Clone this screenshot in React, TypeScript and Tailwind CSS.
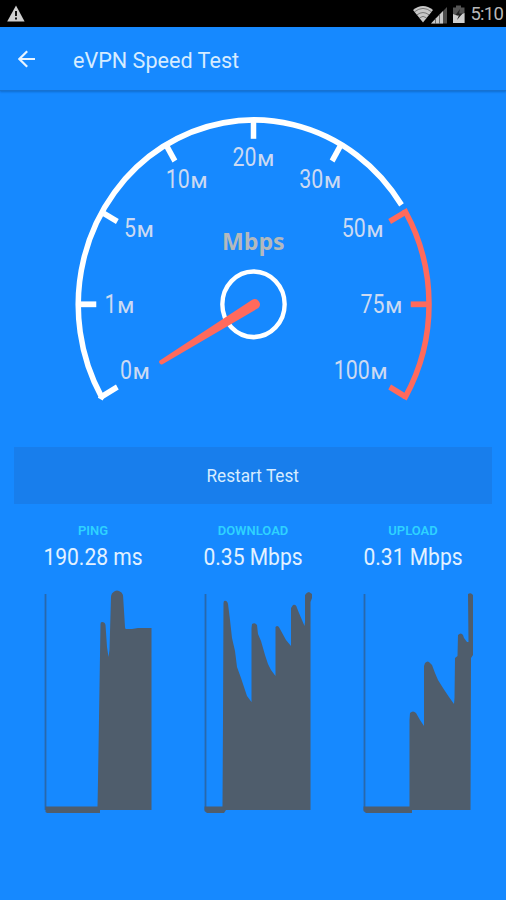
const whiteTicks = [0, 1, 2, 3, 4, 5];
const redTicks = [6, 7, 8];

// x = left edge, w = width of the digits, y = baseline
const labels = [
  { value: "0", x: 120, w: 12, y: 378.8 },
  { value: "1", x: 104.5, w: 12, y: 312.5 },
  { value: "5", x: 124, w: 12, y: 237.3 },
  { value: "10", x: 165.7, w: 24, y: 188 },
  { value: "20", x: 232.5, w: 24, y: 166.3 },
  { value: "30", x: 299.3, w: 24, y: 188 },
  { value: "50", x: 341.7, w: 24, y: 237.3 },
  { value: "75", x: 360.5, w: 24, y: 312.5 },
  { value: "100", x: 333.7, w: 36, y: 378.8 },
];

const stats = [
  {
    label: "PING",
    value: "190.28 ms",
    axis: 15.5,
    path: "M15.5 226.5 L15.5 232 L17 233 L70 233 L70 230 L121.5 230 L121.5 48 L108 48 L102 49 L96 49 Q95 49 95 47 L93 15 Q92 12 89 11 Q87 10 85 11 Q81 13 81 17 L79.5 70 L78.5 77 L77 67 L75.5 45 Q75 42 72 42 Q70.5 42 70.5 44 L68 201 L67.5 226.5 Z",
  },
  {
    label: "DOWNLOAD",
    value: "0.35 Mbps",
    axis: 15.5,
    path: "M14.5 226.5 L14.5 231 L17 233 L34 233 L36 230 L120.5 230 L120.5 22 L122 18 L122 14 L119 12 Q117 12 115 15 L115 42 L114.5 46 L112 40 L109 33 L107 28 Q106 24 103 25 L101 28 L101 66 L96 60 L90 49 Q88 44 85.5 47 L85.5 96 L81 90 L78 84 L75 75 L71 61 L68 54 L67 45 Q65 42 62 44 L61.5 48 L61.5 122 L57 116 L54 107 L51 98 L47 87 L45 71 L42 58 L40 40 L38 24 Q37 20 34 21 L33.5 23 L33 140 L32.5 226.5 Z",
  },
  {
    label: "UPLOAD",
    value: "0.31 Mbps",
    axis: 14.5,
    path: "M13.5 226.5 L13.5 231 L16 233 L62 233 L62 230 L120.5 230 L121 78 L123 75 L123 15 Q121 12 118 14 L118.5 62 L117 62 L114 58 L113 55 Q111 52 108 55 L107.5 76 L105 78 L104.5 118 L104 124 L99 117 L93 108 L88 100 L85 93 L82 85 L80 83 Q78 80 75 83 L74 86 L74 146 L70 140 L66 133 Q63 130 60 133 L59.5 140 L59.5 226.5 Z",
  },
];

function StatusBar() {
  return (
    <div className="flex h-[27px] items-center justify-between bg-black pr-[3px] pl-[7px]">
      <svg width="18" height="17" viewBox="0 0 18 17">
        <path d="M9 .5 L17.6 16.5 H.2 Z" fill="#cfcfcf" />
        <path d="M9 6 V11 M9 12.5 V14.5" stroke="#111" strokeWidth="2" />
      </svg>
      <div className="flex items-center">
        <svg width="54" height="20" viewBox="412 2 54 20">
          <path d="M412 8 Q422 0 432 8 L422 20.5 Z" fill="#c8c8c8" />
          <path
            d="M413.5 9.8 Q422 3 430.5 9.8 M416 12.8 Q422 8.3 428 12.8 M418.5 15.8 Q422 13 425.5 15.8"
            fill="none"
            stroke="#555"
            strokeWidth=".7"
          />
          <path d="M430 21.5 L446 5 V21.5 Z" fill="#4d4d4d" />
          <path d="M430 21.5 L442 9 V21.5 Z" fill="#c8c8c8" />
          <path d="M434.5 16 V22 M438.5 12 V22" stroke="#555" strokeWidth=".8" />
          <path d="M455 3.5 H460 V5.5 H463.5 V21 H452 V5.5 H455 Z" fill="#555" />
          <path d="M452 12 L457 14 L463.5 11 V21 H452 Z" fill="#d0d0d0" />
          <path d="M459 7 L454.5 13 H458 L456 18 L461.5 11.5 H458 Z" fill="#222" />
        </svg>
        <span className="ml-[4px] text-[18.5px] leading-[26px] tracking-[-0.8px] text-[#b8b8b8]">5:10</span>
      </div>
    </div>
  );
}

function Tick({ step, color }: { step: number; color: string }) {
  return (
    <line
      x1={-184.8}
      x2={-165.5}
      y1={0}
      y2={0}
      stroke={color}
      strokeWidth={5.8}
      transform={`rotate(${step * 30 - 30})`}
    />
  );
}

function Gauge() {
  return (
    <svg width="506" height="353" viewBox="0 94 506 353" className="block">
      <g transform="translate(253.5 304.3) scale(.95 1)" fill="none">
        <path d="M-161.3 94.8 L-160 92.4 A184.8 184.8 0 0 1 155.8 -99.4" stroke="#fff" strokeWidth="5.8" />
        <path
          d="M158.7 -94.8 L160 -92.4 A184.8 184.8 0 0 1 160 92.4 L158.7 94.8"
          stroke="#ff6a5c"
          strokeWidth="5.8"
        />
        {whiteTicks.map((step) => (
          <Tick key={step} step={step} color="#fff" />
        ))}
        {redTicks.map((step) => (
          <Tick key={step} step={step} color="#ff6a5c" />
        ))}
        <circle r="32.8" stroke="#fff" strokeWidth="4.6" />
      </g>
      <path d="M160.5 360 L252.2 299.8 A5.2 5.2 0 0 1 258.4 308 L162.5 364.2 A2.2 2.2 0 0 1 160.5 360 Z" fill="#ff6a5c" />
      {labels.map((label) => (
        <g key={label.value} fill="#ccdaf2">
          <text x={label.x} y={label.y} textLength={label.w} lengthAdjust="spacingAndGlyphs" fontSize="26">
            {label.value}
          </text>
          <text
            x={label.x + label.w + 1}
            y={label.y}
            textLength="16.5"
            lengthAdjust="spacingAndGlyphs"
            fontSize="17"
            className="font-medium"
          >
            M
          </text>
        </g>
      ))}
      <text
        x="222"
        y="249.5"
        textLength="62.5"
        lengthAdjust="spacingAndGlyphs"
        fill="#b3b9bd"
        fontSize="22.5"
        className="font-['Open_Sans',sans-serif] font-bold"
      >
        Mbps
      </text>
    </svg>
  );
}

export default function App() {
  return (
    <div className="h-[900px] w-[506px] overflow-hidden bg-[#1689ff] font-['Roboto',sans-serif]">
      <StatusBar />
      <header className="flex h-[64px] items-center border-b border-[#1672d2] pl-[18px] shadow-[0_1px_2px_rgba(0,40,90,0.3)]">
        <svg width="18" height="18" viewBox="0 0 18 18" fill="none" stroke="#e8f4ff" strokeWidth="2.2">
          <path d="M17 9 H2 M9.2 1.2 L1.4 9 L9.2 16.8" />
        </svg>
        <h1 className="ml-[37px] origin-left scale-x-[0.96] pt-[2px] text-[22.5px] leading-[28px] text-[#d6ecff]">
          eVPN Speed Test
        </h1>
      </header>
      <div className="pt-[3px]">
        <Gauge />
      </div>
      <button className="mx-[14px] flex h-[57px] w-[478px] items-center justify-center bg-[#187eec] pt-[2px] text-[18.5px] text-[#d6ecff]">
        <span className="scale-x-[0.93]">Restart Test</span>
      </button>
      <div className="flex gap-[20px] pt-[18px] pl-[30px]">
        {stats.map((stat) => (
          <div key={stat.label} className="w-[140px]">
            <div className="w-[126px] text-center text-[13px] leading-[18px] font-semibold text-[#2ed3ff]">
              {stat.label}
            </div>
            <div className="h-[34px] w-[126px] scale-x-[0.915] pt-px text-center text-[23px] leading-[34px] whitespace-nowrap text-[#e2f1ff]">
              {stat.value}
            </div>
            <svg width="140" height="245" viewBox="0 -6 140 245" className="block">
              <path d={`M${stat.axis} 14 V230`} stroke="#2868ac" strokeWidth="1.8" />
              <path d={stat.path} fill="#4f5d6c" />
            </svg>
          </div>
        ))}
      </div>
    </div>
  );
}
